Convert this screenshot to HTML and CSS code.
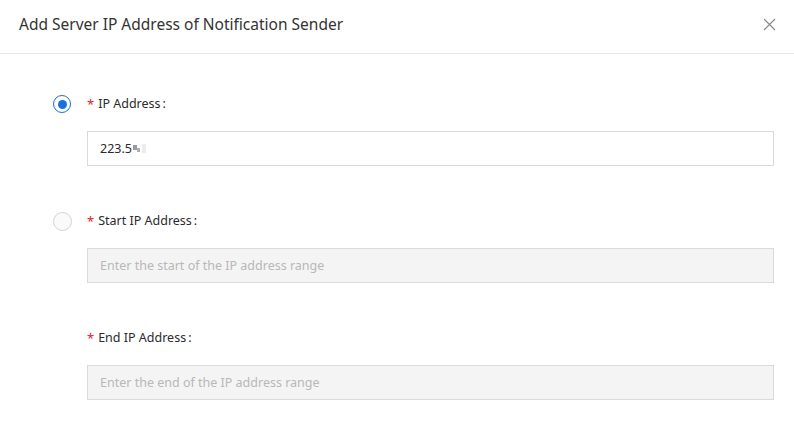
FILE: index.html
```html
<!DOCTYPE html>
<html>
<head>
<meta charset="utf-8">
<link rel="stylesheet" href="styles.css">
</head>
<body>
<div class="dialog">
  <div class="header">
    <div class="title">Add Server IP Address of Notification Sender</div>
    <svg class="close" width="13" height="13" viewBox="0 0 13 13"><path d="M1 1 L12 12 M12 1 L1 12" stroke="#8a8a8a" stroke-width="1.2" fill="none"/></svg>
  </div>
  <div class="form">
    <div class="option">
      <div class="radio-col"><span class="radio checked"></span></div>
      <div class="fields">
        <div class="field">
          <div class="label"><span class="req">*</span>IP Address<span class="colon">:</span></div>
          <div class="input"><span class="value">223.5</span><span class="mask"><i class="m1"></i><i class="m2"></i><i class="m3"></i></span></div>
        </div>
      </div>
    </div>
    <div class="option">
      <div class="radio-col"><span class="radio"></span></div>
      <div class="fields">
        <div class="field">
          <div class="label"><span class="req">*</span>Start IP Address<span class="colon">:</span></div>
          <div class="input disabled"><span class="placeholder">Enter the start of the IP address range</span></div>
        </div>
        <div class="field">
          <div class="label"><span class="req">*</span>End IP Address<span class="colon">:</span></div>
          <div class="input disabled"><span class="placeholder">Enter the end of the IP address range</span></div>
        </div>
      </div>
    </div>
  </div>
</div>
</body>
</html>
```
FILE: styles.css
```css
html, body {
  margin: 0;
  padding: 0;
  background: #ffffff;
}
body {
  font-family: "Noto Sans", "Open Sans", "Liberation Sans", sans-serif;
  color: #333333;
}
.dialog {
  width: 794px;
  height: 434px;
  overflow: hidden;
}
.header {
  height: 53px;
  border-bottom: 1px solid #e8e8e8;
  display: flex;
  align-items: center;
  justify-content: space-between;
  padding: 0 18px 0 19px;
  box-sizing: content-box;
}
.title {
  font-size: 15.5px;
  color: #333;
  margin-top: -6px;
}
.close {
  margin-top: -4px;
}
.form {
  padding: 40px 20px 0 53px;
}
.option {
  display: flex;
  margin-bottom: 45px;
}
.radio-col {
  width: 34px;
  flex: none;
  padding-top: 1px;
}
.radio {
  display: block;
  width: 17px;
  height: 17px;
  border: 1px solid #d4d4d4;
  border-radius: 50%;
  background: #fafafa;
  position: relative;
}
.radio.checked {
  border: 1.5px solid #1b6fdb;
  background: #fff;
  width: 16px;
  height: 16px;
}
.radio.checked::after {
  content: "";
  position: absolute;
  left: 3.5px;
  top: 3.5px;
  width: 9px;
  height: 9px;
  border-radius: 50%;
  background: #1b6fdb;
}
.fields {
  flex: 1;
}
.field + .field {
  margin-top: 45px;
}
.label {
  height: 20px;
  line-height: 20px;
  font-size: 12.5px;
  color: #2b2b2b;
  margin-bottom: 17px;
  display: flex;
  align-items: center;
}
.req {
  color: #e02020;
  margin-right: 4px;
  font-size: 13px;
}
.colon {
  margin-left: 2px;
}
.input {
  height: 33px;
  border: 1px solid #d9d9d9;
  background: #fff;
  display: flex;
  align-items: center;
  padding: 0 12px;
  font-size: 12.5px;
}
.input.disabled {
  background: #f4f4f4;
  border-color: #dadada;
}
.value {
  color: #2b2b2b;
}
.placeholder {
  color: #b8b8b8;
}
.mask {
  display: inline-flex;
  align-items: center;
  margin-left: 1px;
}
.mask i {
  display: inline-block;
}
.mask .m1 {
  width: 4px;
  height: 5px;
  background: #9a9a9a;
  margin-top: -3px;
}
.mask .m2 {
  width: 3px;
  height: 4px;
  background: #b0b0b0;
  margin-top: 3px;
}
.mask .m3 {
  width: 4px;
  height: 9px;
  background: #ececec;
  margin-left: 2px;
}
```
